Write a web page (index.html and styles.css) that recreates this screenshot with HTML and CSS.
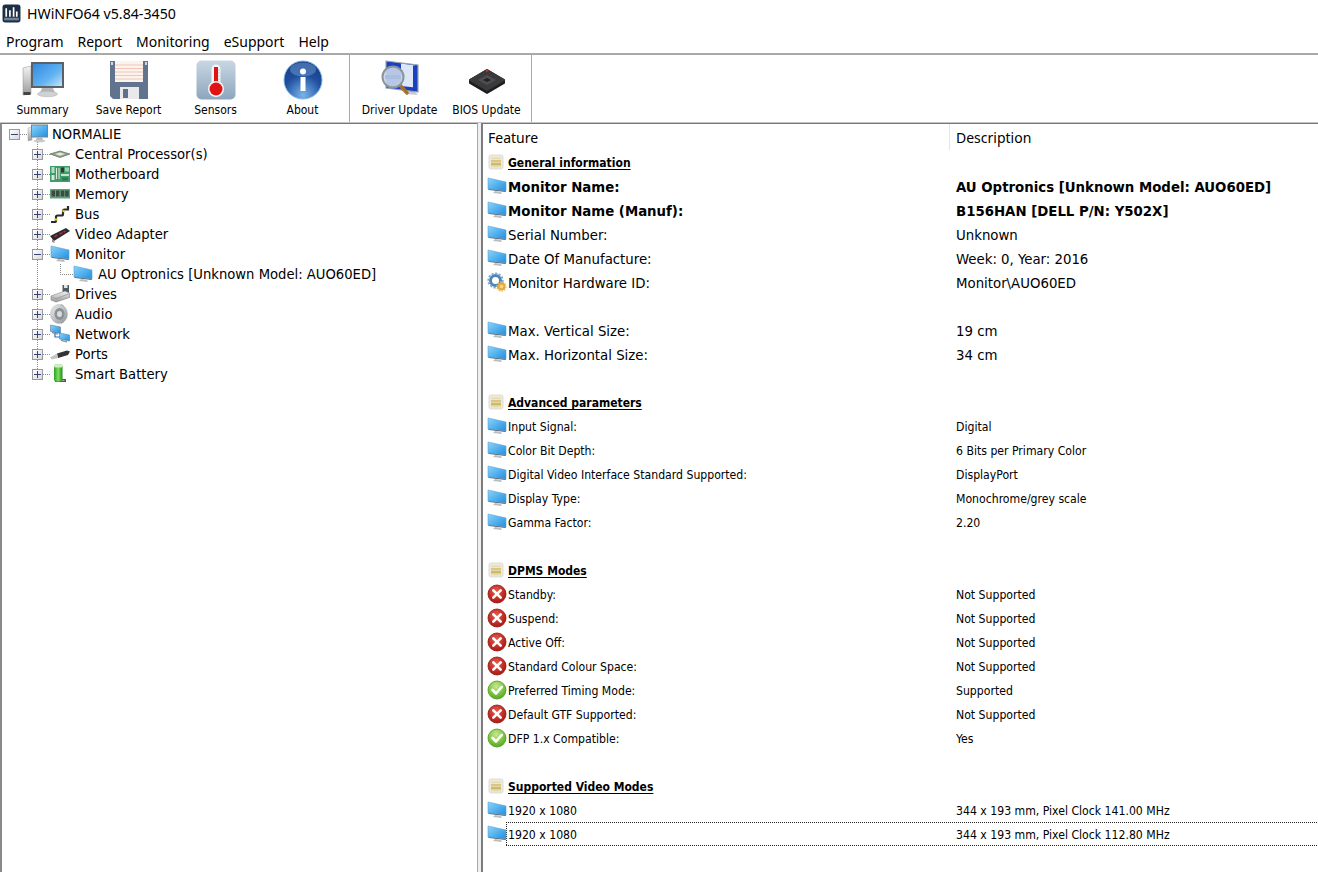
FILE: index.html
```html
<!DOCTYPE html>
<html lang="en">
<head>
<meta charset="utf-8">
<title>HWiNFO64 v5.84-3450</title>
<link rel="stylesheet" href="styles.css">
</head>
<body>
<svg class="defs" width="0" height="0" aria-hidden="true">
  <defs>
    <linearGradient id="scr" x1="0" y1="0" x2="1" y2="1"><stop offset="0" stop-color="#8ad4fa"/><stop offset="1" stop-color="#1f8fe3"/></linearGradient>
    <linearGradient id="scr2" x1="0" y1="0" x2="1" y2="1"><stop offset="0" stop-color="#2f86e0"/><stop offset=".6" stop-color="#62b4f2"/><stop offset="1" stop-color="#cfeafc"/></linearGradient>
    <linearGradient id="silver" x1="0" y1="0" x2="0" y2="1"><stop offset="0" stop-color="#f4f4f4"/><stop offset="1" stop-color="#9a9a9a"/></linearGradient>
    <radialGradient id="red" cx=".45" cy=".35" r=".7"><stop offset="0" stop-color="#e8604f"/><stop offset="1" stop-color="#a50f0c"/></radialGradient>
    <radialGradient id="green" cx=".45" cy=".3" r=".75"><stop offset="0" stop-color="#c4ec8b"/><stop offset="1" stop-color="#4ea318"/></radialGradient>
    <radialGradient id="ball" cx=".5" cy=".9" r=".95"><stop offset="0" stop-color="#78b4ea"/><stop offset=".55" stop-color="#1f4f9e"/><stop offset="1" stop-color="#143a80"/></radialGradient>
    <linearGradient id="sens" x1="0" y1="0" x2="0" y2="1"><stop offset="0" stop-color="#c9d7e3"/><stop offset="1" stop-color="#8da6bd"/></linearGradient>
    <linearGradient id="batt" x1="0" y1="0" x2="1" y2="0"><stop offset="0" stop-color="#2f9d2a"/><stop offset=".5" stop-color="#7fe05a"/><stop offset="1" stop-color="#1f8a24"/></linearGradient>
    <linearGradient id="spk" x1="0" y1="0" x2="1" y2="1"><stop offset="0" stop-color="#eceeef"/><stop offset="1" stop-color="#8f9496"/></linearGradient>
    <symbol id="mon" viewBox="0 0 20 20">
      <path d="M1 2 19 6v9L1 13z" fill="url(#scr)" stroke="#5aa0d4" stroke-width=".6"/>
      <path d="M1 13 19 15 18.500 16 2 14z" fill="#5d6b78"/>
      <path d="M8 15l6 1 1 2-9-1z" fill="#b9bec2"/>
    </symbol>
    <symbol id="sec" viewBox="0 0 16 16">
      <rect x="1" y="1" width="14" height="14" rx="2" fill="#ecebe5" stroke="#d6d4ca" stroke-width=".8"/>
      <rect x="3" y="3" width="10" height="2.500" fill="#e9dfb0"/>
      <rect x="3" y="6" width="10" height="2.500" fill="#d9c67c"/>
      <rect x="3" y="9" width="10" height="2.500" fill="#cfb962"/>
      <rect x="3" y="12" width="10" height="1.500" fill="#e6dcae"/>
    </symbol>
    <symbol id="bad" viewBox="0 0 20 20">
      <circle cx="10" cy="10" r="9" fill="url(#red)" stroke="#8c1410" stroke-width=".8"/>
      <path d="M6.300 6.300 13.700 13.700M13.700 6.300 6.300 13.700" stroke="#fff" stroke-width="2.600" stroke-linecap="round"/>
    </symbol>
    <symbol id="ok" viewBox="0 0 20 20">
      <circle cx="10" cy="10" r="9" fill="url(#green)" stroke="#4c9a1c" stroke-width=".8"/>
      <path d="M5.500 10 9 13.500 14.800 6.800" fill="none" stroke="#fff" stroke-width="2.600" stroke-linecap="round" stroke-linejoin="round"/>
    </symbol>
    <symbol id="gear" viewBox="0 0 20 20">
      <circle cx="8.500" cy="8.500" r="5" fill="none" stroke="#4f84b8" stroke-width="3"/>
      <circle cx="8.500" cy="8.500" r="7.200" fill="none" stroke="#7aa7d1" stroke-width="1.800" stroke-dasharray="2.200 1.500"/>
      <circle cx="14.500" cy="14.500" r="3" fill="#f4d38a" stroke="#e2a83a" stroke-width="2"/>
      <circle cx="14.500" cy="14.500" r="4.600" fill="none" stroke="#eebd5c" stroke-width="1.200" stroke-dasharray="1.600 1.200"/>
    </symbol>
    <symbol id="comp" viewBox="0 0 22 20">
      <path d="M1 4l4-1v13l-4 1z" fill="url(#silver)" stroke="#999" stroke-width=".4"/>
      <rect x="4.500" y="1" width="16" height="12" fill="url(#scr)" stroke="#7a8288"/>
      <path d="M10 13h5l1 3H9z" fill="#b5b9bc"/>
      <ellipse cx="12.500" cy="17" rx="6" ry="1.500" fill="#c8cbce"/>
    </symbol>
    <symbol id="cpu" viewBox="0 0 20 20">
      <path d="M0 10 10 7 20 10 10 13.500z" fill="#8fa392" stroke="#4c5a4e" stroke-width=".6"/>
      <path d="M5 10 10 8.500 15 10 10 11.800z" fill="#e6e8d8"/>
    </symbol>
    <symbol id="mobo" viewBox="0 0 20 20">
      <rect x="0" y="2" width="20" height="16" fill="#3f9c6c"/>
      <rect x="1.500" y="3" width="3" height="6" fill="#b6dcc0"/>
      <path d="M6 4h1v11H6zM8.500 4h1v11h-1z" fill="#dfeedc"/>
      <rect x="11" y="3.500" width="3" height="5" fill="#4a2f28"/>
      <rect x="15" y="3.500" width="4" height="4" fill="#9ed2ae"/>
      <rect x="11" y="10" width="8" height="2" fill="#c8e2cc"/>
      <rect x="12" y="13.500" width="6" height="3" fill="#2d7a52"/>
      <rect x="1.500" y="11" width="3" height="5" fill="#d4e8d2"/>
    </symbol>
    <symbol id="ram" viewBox="0 0 20 20">
      <rect x="0" y="5" width="20" height="9.500" fill="#62a07a"/>
      <path d="M1.500 6.500h3.500v6H1.500zM6 6.500h3.500v6H6zM10.800 6.500h3.500v6h-3.500zM15.200 6.500h3.500v6h-3.500z" fill="#3b4a42"/>
    </symbol>
    <symbol id="bus" viewBox="0 0 20 20">
      <path d="M1 18h3.500q1.500 0 1.500-1.500V13q0-1.500 1.500-1.500h4Q13 11.500 13 10V7q0-1.500 1.500-1.500H18V2" fill="none" stroke="#2b2b2b" stroke-width="2.200"/>
      <circle cx="6" cy="15.500" r="1.300" fill="#e0c820"/><circle cx="13.500" cy="7" r="1.300" fill="#e0c820"/>
    </symbol>
    <symbol id="gpu" viewBox="0 0 20 20">
      <path d="M0 12 16 4l4 3-16 10z" fill="#2b2b2e"/>
      <path d="M4 12l3-1.500 1 1-3 1.700zM9 9.500l3-1.500 1 1-3 1.700zM13 7.500l2-1 1 1-2 1.200z" fill="#c02a30"/>
      <path d="M2 15l2 2 1 2-3-1z" fill="#8a8a8a"/>
    </symbol>
    <symbol id="drive" viewBox="0 0 20 20">
      <rect x="12.500" y="1" width="6.500" height="8" fill="#4e5a63"/>
      <rect x="14" y="1" width="3.500" height="3" fill="#e2e5e7"/>
      <path d="M1 12 15 7l4.500 2v4.500L6 18l-5-2z" fill="url(#silver)" stroke="#6c6c6c" stroke-width=".5"/>
      <path d="M1.500 13l4.500 1.800 13-5" fill="none" stroke="#8a8a8a" stroke-width=".6"/>
    </symbol>
    <symbol id="audio" viewBox="0 0 20 20">
      <path d="M11 .5c6 1 7 17 0 19z" fill="#4d5154"/>
      <ellipse cx="9" cy="10" rx="8.500" ry="9.500" fill="url(#spk)" stroke="#9ca0a2" stroke-width=".4"/>
      <ellipse cx="9.500" cy="10" rx="5" ry="6" fill="#8c9195"/>
      <ellipse cx="9.500" cy="10" rx="2.500" ry="3" fill="#d9dcdf"/>
    </symbol>
    <symbol id="net" viewBox="0 0 20 20">
      <path d="M5 8v5h6" fill="none" stroke="#2d6fb8" stroke-width="1.200"/>
      <path d="M.5 1l10 2v6.500l-10-2z" fill="url(#scr)" stroke="#4c6a88" stroke-width=".5"/>
      <path d="M9.500 9l10 2v6l-10-2z" fill="url(#scr)" stroke="#4c6a88" stroke-width=".5"/>
      <path d="M2 8l6 1.500v1.200L2 9.300zM11 15.800l6 1.500v1.200l-6-1.500z" fill="#838b92"/>
    </symbol>
    <symbol id="port" viewBox="0 0 20 20">
      <path d="M7 9.500 17 6.500l3 1-2 3.500L8 14z" fill="#333335"/>
      <path d="M0 13.500 7 9.500l1 4.500-6 1.500z" fill="#c4c4c4"/>
    </symbol>
    <symbol id="bat" viewBox="0 0 20 20">
      <path d="M11 15h5v3H5v-1.500h9.500V16H11z" fill="#50555a"/>
      <rect x="4" y=".5" width="8.500" height="17" rx="2" fill="url(#batt)"/>
      <rect x="4" y=".5" width="8.500" height="3" rx="1.500" fill="#cfeec2"/>
    </symbol>
    <symbol id="t-summary" viewBox="0 0 42 40">
      <path d="M1 8l8-2v28l-8 1z" fill="url(#silver)" stroke="#8c8c8c" stroke-width=".5"/>
      <rect x="1.500" y="32" width="7" height="3" fill="#444"/>
      <rect x="10" y="3" width="31" height="24" fill="url(#scr2)" stroke="#5a6268" stroke-width="2"/>
      <path d="M20 28h11l2 5H18z" fill="#b4b8bb"/>
      <ellipse cx="25.500" cy="34" rx="10" ry="2.800" fill="#cfd1d3" stroke="#aaa" stroke-width=".5"/>
    </symbol>
    <symbol id="t-save" viewBox="0 0 40 40">
      <path d="M1 1h38v38H4l-3-3z" fill="#627390"/>
      <rect x="6" y="1" width="28" height="21" fill="#fbf3ee"/>
      <path d="M6 5h28M6 8.500h28M6 12h28M6 15.500h28M6 19h28" stroke="#f5c4b8" stroke-width="1"/>
      <rect x="11" y="27" width="19" height="12" fill="#e9e9e9"/>
      <rect x="14" y="29" width="5" height="9" fill="#5f7089"/>
      <rect x="2" y="2" width="2" height="3" fill="#cfd6de"/><rect x="36" y="2" width="2" height="3" fill="#cfd6de"/>
    </symbol>
    <symbol id="t-sensors" viewBox="0 0 40 40">
      <rect x=".5" y=".5" width="39" height="39" rx="5" fill="url(#sens)"/>
      <rect x="15.500" y="4.500" width="9" height="26" rx="4.500" fill="#f3f5f7"/>
      <rect x="18" y="7" width="4" height="21" fill="#e01414"/>
      <circle cx="20" cy="29" r="8" fill="#f3f5f7"/>
      <circle cx="20" cy="29" r="6.500" fill="#e01414"/>
      <path d="M22 10h1.500M22 13h1.500M22 16h1.500M22 19h1.500M22 22h1.500" stroke="#a0a0a0" stroke-width=".6"/>
    </symbol>
    <symbol id="t-about" viewBox="0 0 40 40">
      <circle cx="20" cy="20" r="19" fill="url(#ball)" stroke="#7fb4e6" stroke-width="1"/>
      <ellipse cx="20" cy="9.500" rx="13" ry="7" fill="#7aa3d8" opacity=".45"/>
      <circle cx="20" cy="11.500" r="3" fill="#fff"/>
      <rect x="17.500" y="17" width="5" height="14" fill="#fff"/>
    </symbol>
    <symbol id="t-driver" viewBox="0 0 40 40">
      <path d="M27 31l8 1 3 3-11-1z" fill="#c7cacc"/>
      <path d="M6 1l32 4v27L6 28z" fill="#1a3fc0" stroke="#9aa4ad" stroke-width="1.200"/>
      <path d="M21 3.500l14 2v22l-14-1.500z" fill="#dce6f6"/>
      <path d="M33 5.500l3 .4v24l-3-.4z" fill="#1a3fc0"/>
      <path d="M18 23l9 10" stroke="#a9722c" stroke-width="3.500" stroke-linecap="round"/>
      <circle cx="13" cy="17" r="10.500" fill="#c6d5ea" fill-opacity=".9" stroke="#8a949c" stroke-width="2"/>
      <path d="M5 15h16v4H5z" fill="#a9bfdd"/>
    </symbol>
    <symbol id="t-bios" viewBox="0 0 40 40">
      <path d="M3 20 20 10l17 10v3L20 33 3 23z" fill="#1e1e20" stroke="#1e1e20" stroke-width="2" stroke-linejoin="round"/>
      <path d="M3 20 20 10l17 10-17 10z" fill="#3a3a3c" stroke="#3a3a3c" stroke-width="2" stroke-linejoin="round"/>
      <path d="M11 20 20 15l9 5-9 5z" fill="#4e4e51"/>
      <path d="M16 20l4-2 4 2-4 2z" fill="#222"/>
      <circle cx="20" cy="10.500" r="1.300" fill="#c03030"/>
    </symbol>
  </defs>
</svg>

<header class="title"><svg class="app" viewBox="0 0 18 18"><rect x=".5" y=".5" width="17" height="17" rx="2.500" fill="#1d2f45"/><path d="M4 4v8M7.500 6v6M11 3v9M14 7v5" stroke="#fff" stroke-width="1.600"/><rect x="2" y="13" width="14" height="2.500" fill="#6e8297"/></svg><span>HWiNFO64 v5.84-3450</span></header>

<nav class="menu"><span>Program</span><span>Report</span><span>Monitoring</span><span>eSupport</span><span>Help</span></nav>

<section class="toolbar">
  <div class="tool first"><svg class="ti"><use href="#t-summary"/></svg><span>Summary</span></div>
  <div class="tool"><svg class="ti"><use href="#t-save"/></svg><span>Save Report</span></div>
  <div class="tool"><svg class="ti"><use href="#t-sensors"/></svg><span>Sensors</span></div>
  <div class="tool"><svg class="ti"><use href="#t-about"/></svg><span>About</span></div>
  <div class="sep"></div>
  <div class="tool"><svg class="ti"><use href="#t-driver"/></svg><span>Driver Update</span></div>
  <div class="tool"><svg class="ti"><use href="#t-bios"/></svg><span>BIOS Update</span></div>
  <div class="sep"></div>
</section>

<main class="panes">
  <aside class="tree">
    <div class="node root"><i class="box minus"></i><svg class="ic comp"><use href="#comp"/></svg><span>NORMALIE</span></div>
    <div class="node"><i class="box"></i><svg class="ic"><use href="#cpu"/></svg><span>Central Processor(s)</span></div>
    <div class="node"><i class="box"></i><svg class="ic"><use href="#mobo"/></svg><span>Motherboard</span></div>
    <div class="node"><i class="box"></i><svg class="ic"><use href="#ram"/></svg><span>Memory</span></div>
    <div class="node"><i class="box"></i><svg class="ic"><use href="#bus"/></svg><span>Bus</span></div>
    <div class="node"><i class="box"></i><svg class="ic"><use href="#gpu"/></svg><span>Video Adapter</span></div>
    <div class="node"><i class="box minus"></i><svg class="ic"><use href="#mon"/></svg><span>Monitor</span></div>
    <div class="node leaf"><svg class="ic"><use href="#mon"/></svg><span>AU Optronics [Unknown Model: AUO60ED]</span></div>
    <div class="node"><i class="box"></i><svg class="ic"><use href="#drive"/></svg><span>Drives</span></div>
    <div class="node"><i class="box"></i><svg class="ic"><use href="#audio"/></svg><span>Audio</span></div>
    <div class="node"><i class="box"></i><svg class="ic"><use href="#net"/></svg><span>Network</span></div>
    <div class="node"><i class="box"></i><svg class="ic"><use href="#port"/></svg><span>Ports</span></div>
    <div class="node last"><i class="box"></i><svg class="ic"><use href="#bat"/></svg><span>Smart Battery</span></div>
  </aside>
  <section class="list">
    <div class="head"><span class="c1">Feature</span><span class="c2">Description</span></div>
    <div class="row sect"><span class="c1"><svg class="ri"><use href="#sec"/></svg><b>General information</b></span></div>
    <div class="row big strong"><span class="c1"><svg class="ri"><use href="#mon"/></svg>Monitor Name:</span><span class="c2">AU Optronics [Unknown Model: AUO60ED]</span></div>
    <div class="row big strong"><span class="c1"><svg class="ri"><use href="#mon"/></svg>Monitor Name (Manuf):</span><span class="c2">B156HAN [DELL P/N: Y502X]</span></div>
    <div class="row big"><span class="c1"><svg class="ri"><use href="#mon"/></svg>Serial Number:</span><span class="c2">Unknown</span></div>
    <div class="row big"><span class="c1"><svg class="ri"><use href="#mon"/></svg>Date Of Manufacture:</span><span class="c2">Week: 0, Year: 2016</span></div>
    <div class="row big"><span class="c1"><svg class="ri"><use href="#gear"/></svg>Monitor Hardware ID:</span><span class="c2">Monitor\AUO60ED</span></div>
    <div class="row"></div>
    <div class="row big"><span class="c1"><svg class="ri"><use href="#mon"/></svg>Max. Vertical Size:</span><span class="c2">19 cm</span></div>
    <div class="row big"><span class="c1"><svg class="ri"><use href="#mon"/></svg>Max. Horizontal Size:</span><span class="c2">34 cm</span></div>
    <div class="row"></div>
    <div class="row sect"><span class="c1"><svg class="ri"><use href="#sec"/></svg><b>Advanced parameters</b></span></div>
    <div class="row"><span class="c1"><svg class="ri"><use href="#mon"/></svg>Input Signal:</span><span class="c2">Digital</span></div>
    <div class="row"><span class="c1"><svg class="ri"><use href="#mon"/></svg>Color Bit Depth:</span><span class="c2">6 Bits per Primary Color</span></div>
    <div class="row"><span class="c1"><svg class="ri"><use href="#mon"/></svg>Digital Video Interface Standard Supported:</span><span class="c2">DisplayPort</span></div>
    <div class="row"><span class="c1"><svg class="ri"><use href="#mon"/></svg>Display Type:</span><span class="c2">Monochrome/grey scale</span></div>
    <div class="row"><span class="c1"><svg class="ri"><use href="#mon"/></svg>Gamma Factor:</span><span class="c2">2.20</span></div>
    <div class="row"></div>
    <div class="row sect"><span class="c1"><svg class="ri"><use href="#sec"/></svg><b>DPMS Modes</b></span></div>
    <div class="row"><span class="c1"><svg class="ri"><use href="#bad"/></svg>Standby:</span><span class="c2">Not Supported</span></div>
    <div class="row"><span class="c1"><svg class="ri"><use href="#bad"/></svg>Suspend:</span><span class="c2">Not Supported</span></div>
    <div class="row"><span class="c1"><svg class="ri"><use href="#bad"/></svg>Active Off:</span><span class="c2">Not Supported</span></div>
    <div class="row"><span class="c1"><svg class="ri"><use href="#bad"/></svg>Standard Colour Space:</span><span class="c2">Not Supported</span></div>
    <div class="row"><span class="c1"><svg class="ri"><use href="#ok"/></svg>Preferred Timing Mode:</span><span class="c2">Supported</span></div>
    <div class="row"><span class="c1"><svg class="ri"><use href="#bad"/></svg>Default GTF Supported:</span><span class="c2">Not Supported</span></div>
    <div class="row"><span class="c1"><svg class="ri"><use href="#ok"/></svg>DFP 1.x Compatible:</span><span class="c2">Yes</span></div>
    <div class="row"></div>
    <div class="row sect"><span class="c1"><svg class="ri"><use href="#sec"/></svg><b>Supported Video Modes</b></span></div>
    <div class="row"><span class="c1"><svg class="ri"><use href="#mon"/></svg>1920 x 1080</span><span class="c2">344 x 193 mm, Pixel Clock 141.00 MHz</span></div>
    <div class="row focus"><span class="c1"><svg class="ri"><use href="#mon"/></svg>1920 x 1080</span><span class="c2">344 x 193 mm, Pixel Clock 112.80 MHz</span></div>
  </section>
</main>
</body>
</html>
```
FILE: styles.css
```css
html, body { margin: 0; height: 100%; }
body {
  width: 1318px; height: 872px; overflow: hidden; background: #fff; color: #000;
  font-family: "DejaVu Sans", "Liberation Sans", sans-serif;
  display: flex; flex-direction: column;
}
.defs { display: block; height: 0; }
.title {
  height: 27px; flex: none; display: flex; align-items: center; gap: 6px; padding: 0 0 1px 2px; box-sizing: border-box;
  font: 14.200px "Noto Sans", sans-serif;
}
.app { width: 19px; height: 19px; }
.menu {
  height: 26px; flex: none; display: flex; align-items: center; gap: 14px; padding: 2px 0 0 6px; box-sizing: border-box;
  font: 14px "Noto Sans", sans-serif;
}
.toolbar {
  height: 70px; flex: none; display: flex; box-sizing: border-box;
  border-top: 2px solid #a9a9a9; border-bottom: 1px solid #c4c4c4;
}
.tool {
  width: 87px; display: flex; flex-direction: column; align-items: center; padding-top: 5px; box-sizing: border-box;
  font-size: 12px; font-stretch: condensed;
}
.tool.first { width: 85px; }
.tool span { margin-top: 3px; white-space: nowrap; }
.ti { width: 42px; height: 40px; }
.sep { width: 1px; background: #a9a9a9; margin: 0 6px 0 3px; }
.sep:last-child { margin: 0 0 0 1px; }
.panes { flex: 1; display: flex; min-height: 0; background: #efefef; }
.tree {
  width: 478px; flex: none; box-sizing: border-box; background: #fff;
  border-left: 2px solid #8a8a8a; border-top: 1px solid #777; border-right: 1px solid #a8a8a8;
  font-size: 14.650px; font-stretch: condensed;
}
.node {
  height: 20px; display: flex; align-items: center; padding-left: 30px; white-space: nowrap;
  background:
    repeating-linear-gradient(to bottom, #8c8c8c 0 1px, transparent 1px 2px) 35px 0 / 1px 100% no-repeat,
    repeating-linear-gradient(to right, #8c8c8c 0 1px, transparent 1px 2px) 41px 10px / 8px 1px no-repeat;
}
.node span { margin-bottom: 2px; }
.box {
  width: 9px; height: 9px; flex: none; border: 1px solid #9a9a9a;
  background:
    linear-gradient(#33457a, #33457a) center / 7px 1px no-repeat,
    linear-gradient(#33457a, #33457a) center / 1px 7px no-repeat,
    linear-gradient(135deg, #fff, #d8d8d8);
}
.box.minus {
  background:
    linear-gradient(#33457a, #33457a) center / 7px 1px no-repeat,
    linear-gradient(135deg, #fff, #d8d8d8);
}
.ic { width: 20px; height: 20px; flex: none; margin-left: 7px; margin-right: 5px; }
.root {
  padding-left: 7px;
  background:
    repeating-linear-gradient(to bottom, #8c8c8c 0 1px, transparent 1px 2px) 35px 14px / 1px 6px no-repeat,
    repeating-linear-gradient(to right, #8c8c8c 0 1px, transparent 1px 2px) 18px 10px / 8px 1px no-repeat;
}
.comp { width: 22px; margin: 0 3px 0 7px; }
.leaf {
  padding-left: 71px;
  background:
    repeating-linear-gradient(to bottom, #8c8c8c 0 1px, transparent 1px 2px) 35px 0 / 1px 100% no-repeat,
    repeating-linear-gradient(to bottom, #8c8c8c 0 1px, transparent 1px 2px) 58px 0 / 1px 10px no-repeat,
    repeating-linear-gradient(to right, #8c8c8c 0 1px, transparent 1px 2px) 58px 10px / 13px 1px no-repeat;
}
.leaf .ic { margin-left: 0; margin-right: 5px; }
.last {
  background:
    repeating-linear-gradient(to bottom, #8c8c8c 0 1px, transparent 1px 2px) 35px 0 / 1px 10px no-repeat,
    repeating-linear-gradient(to right, #8c8c8c 0 1px, transparent 1px 2px) 41px 10px / 8px 1px no-repeat;
}
.list {
  flex: 1; min-width: 0; margin-left: 3px; box-sizing: border-box; background: #fff;
  border-left: 2px solid #7c7c7c; border-top: 1px solid #777;
  font-size: 12.150px; font-stretch: condensed;
}
.head { height: 26px; display: flex; align-items: center; font: 14px "Noto Sans", sans-serif; box-sizing: border-box; }
.head .c1 { width: 467px; padding-left: 5px; box-sizing: border-box; border-right: 1px solid #e5e5e5; height: 100%; display: flex; align-items: center; }
.head .c2 { padding-left: 6px; }
.row { height: 24px; display: flex; align-items: center; white-space: nowrap; box-sizing: border-box; padding-top: 2px; }
.row .c1 { width: 473px; flex: none; display: flex; align-items: center; }
.row .c2 { flex: 1; }
.big { font-size: 14.800px; padding-top: 0; }
.strong { font-weight: 700; }
.ri { width: 20px; height: 20px; margin: 0 1px 2px 4px; flex: none; }
.big .ri { margin-bottom: 0; }
.sect .ri { width: 16px; height: 16px; margin: 0 4px 2px 5px; }
.sect b { font-size: 12px; text-decoration: underline; text-underline-offset: 2px; }
.focus {
  background:
    repeating-linear-gradient(to right, #222 0 1px, transparent 1px 2px) 23px 0 / 100% 1px no-repeat,
    repeating-linear-gradient(to right, #222 0 1px, transparent 1px 2px) 23px 23px / 100% 1px no-repeat,
    repeating-linear-gradient(to bottom, #222 0 1px, transparent 1px 2px) 23px 0 / 1px 100% no-repeat;
}
```
